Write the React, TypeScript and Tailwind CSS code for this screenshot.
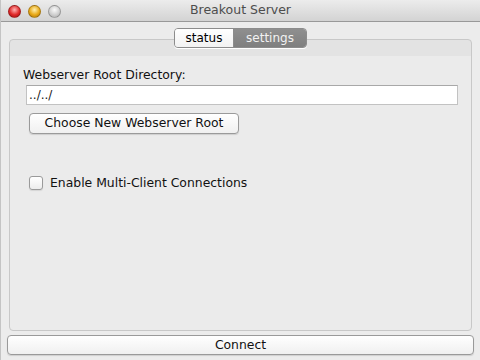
import React from 'react';

const font = { fontFamily: '"Lucida Grande", "DejaVu Sans", sans-serif' };

function Light({ color }: { color: string }) {
  return <span className={`block w-[13px] h-[13px] rounded-full border border-[#00000040] ${color}`} />;
}

export default function App() {
  return (
    <div className="w-[480px] h-[360px] bg-[#ececec] flex flex-col border-l border-[#c4c4c4] text-[12px] text-[#1a1a1a]" style={font}>
      {/* title bar */}
      <div className="h-[22px] relative flex items-center justify-center bg-[linear-gradient(#ececec,#d3d3d3)] border-b border-[#999]">
        <div className="absolute left-[7px] top-[5px] flex gap-[7px]">
          <Light color="bg-[radial-gradient(circle_at_50%_35%,#ffb3b3,#e02a2a_55%,#9c1010)]" />
          <Light color="bg-[radial-gradient(circle_at_50%_35%,#fff0b0,#e8a917_55%,#a8700a)]" />
          <Light color="bg-[radial-gradient(circle_at_50%_35%,#fafafa,#d0d0d0_55%,#a8a8a8)]" />
        </div>
        <span className="text-[12.5px] text-[#4d4d4d]">Breakout Server</span>
      </div>

      <div className="flex-1 flex flex-col">
        {/* tab panel */}
        <div className="mx-[8px] mt-[17px] flex-1 rounded-[4px] border border-[#c8c8c8] bg-[linear-gradient(#e3e3e3_0,#e3e3e3_16px,#ebebeb_16px)] flex flex-col">
          <div className="-mt-[12px] flex justify-center">
            <div className="flex h-[20px] rounded-[4px] border border-[#8c8c8c] overflow-hidden text-[12px] shadow-[0_1px_0_#fff]">
              <div className="w-[59px] flex items-center justify-center bg-[linear-gradient(#fff,#f2f2f2)] text-black border-r border-[#8c8c8c]">status</div>
              <div className="w-[72px] flex items-center justify-center bg-[linear-gradient(#8f8f8f,#7f7f7f)] text-[#f2f2f2]">settings</div>
            </div>
          </div>

          <div className="pl-[13px] pr-[13px] pt-[19px] flex flex-col">
            <div className="leading-[15px] text-[12.4px] text-[#111]">Webserver Root Directory:</div>
            <div className="mt-[3px] ml-[3px] h-[20px] bg-white border border-[#c2c2c2] border-t-[#a8a8a8] flex items-center pl-[2px] text-[12px]">../../</div>
            <button className="mt-[8px] ml-[6px] w-[210px] h-[21px] rounded-[4px] border border-[#9a9a9a] bg-[linear-gradient(#ffffff,#f0f0f0)] shadow-[0_1px_1px_#00000020] text-[12.4px] text-[#111]">
              Choose New Webserver Root
            </button>
            <label className="mt-[40px] ml-[6px] flex items-center gap-[7px] text-[12.4px] text-[#111]">
              <span className="w-[14px] h-[14px] rounded-[3px] border border-[#9a9a9a] bg-[linear-gradient(#fff,#ececec)] shadow-[0_1px_1px_#00000018]" />
              Enable Multi-Client Connections
            </label>
          </div>
        </div>

        <button className="mx-[6px] mt-[4px] mb-[5px] h-[20px] rounded-[4px] border border-[#9a9a9a] bg-[linear-gradient(#ffffff,#f0f0f0)] shadow-[0_1px_1px_#00000020] text-[12.4px] text-[#111]">
          Connect
        </button>
      </div>
    </div>
  );
}
